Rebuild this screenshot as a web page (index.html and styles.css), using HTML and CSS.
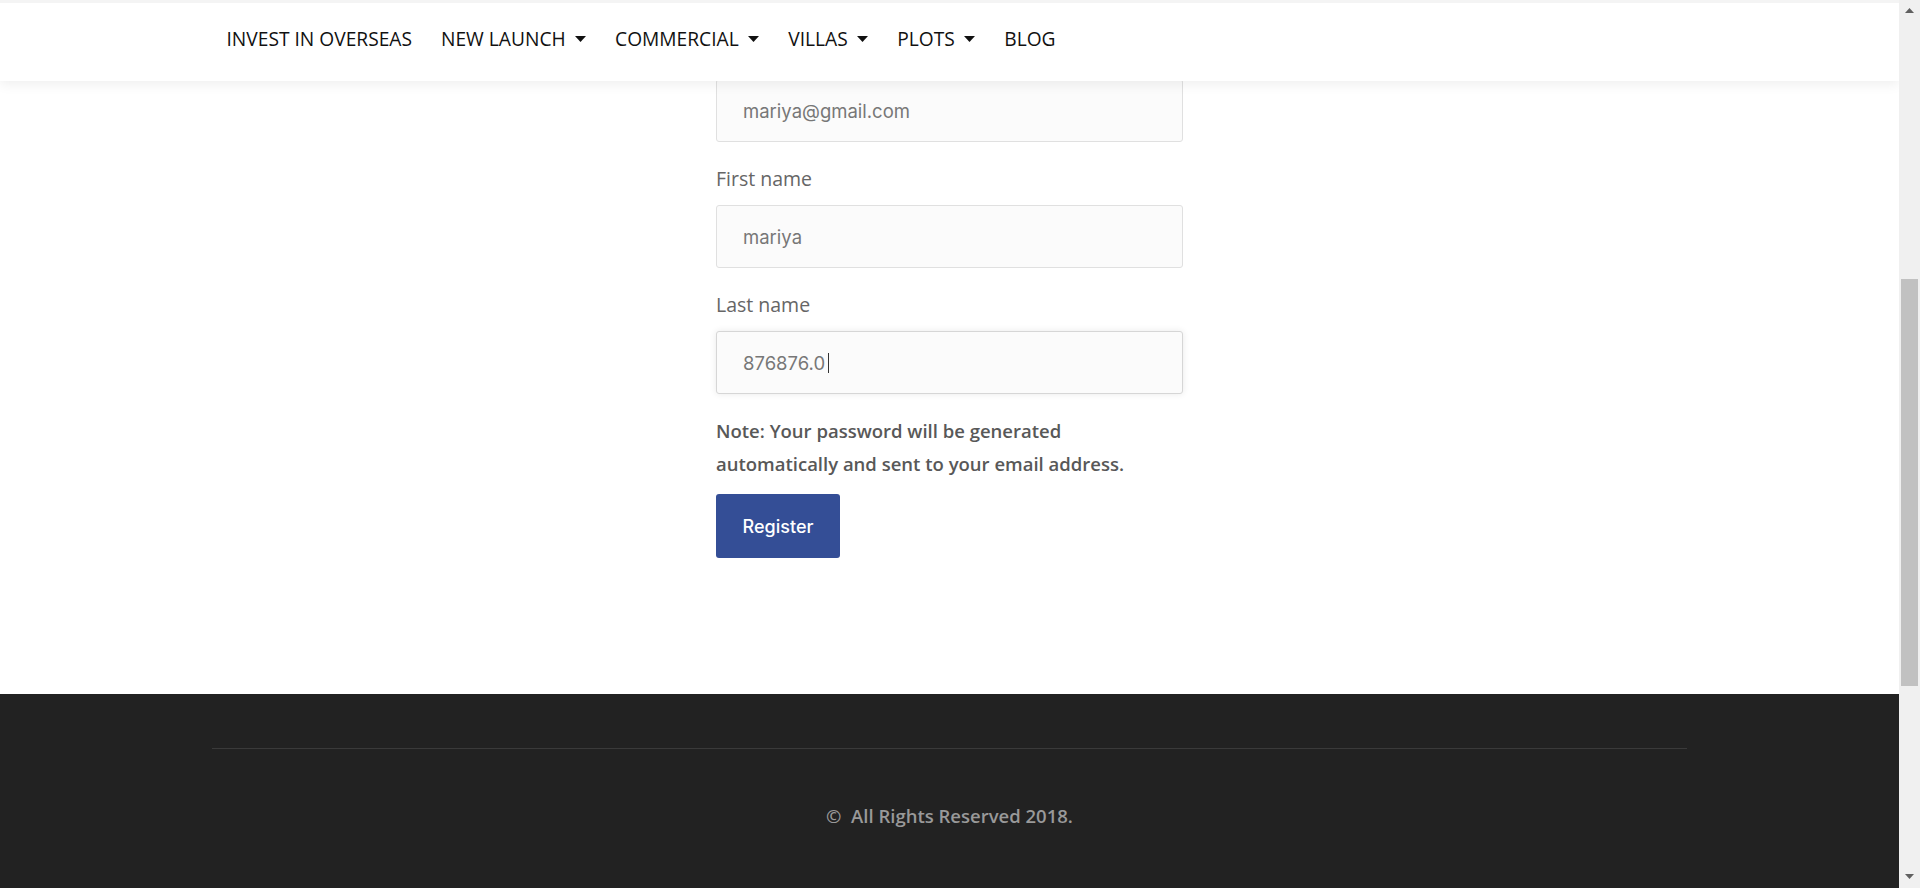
FILE: index.html
```html
<!DOCTYPE html>
<html lang="en">
<head>
<meta charset="utf-8">
<title>Register</title>
<link rel="stylesheet" href="styles.css">
</head>
<body>
<div class="viewport">
  <div class="page">
    <header class="site-header">
      <nav class="container nav">
        <a class="nav-item" href="#">INVEST IN OVERSEAS</a>
        <a class="nav-item" href="#">NEW LAUNCH <svg class="caret" width="11" height="6" viewBox="0 0 11 6"><polygon points="0,0 11,0 5.5,6"/></svg></a>
        <a class="nav-item" href="#">COMMERCIAL <svg class="caret" width="11" height="6" viewBox="0 0 11 6"><polygon points="0,0 11,0 5.5,6"/></svg></a>
        <a class="nav-item" href="#">VILLAS <svg class="caret" width="11" height="6" viewBox="0 0 11 6"><polygon points="0,0 11,0 5.5,6"/></svg></a>
        <a class="nav-item" href="#">PLOTS <svg class="caret" width="11" height="6" viewBox="0 0 11 6"><polygon points="0,0 11,0 5.5,6"/></svg></a>
        <a class="nav-item" href="#">BLOG</a>
      </nav>
    </header>

    <main class="register">
      <form class="register-form">
        <div class="form-group">
          <input class="field" type="email" value="mariya@gmail.com">
        </div>
        <div class="form-group">
          <label class="label">First name</label>
          <input class="field" type="text" value="mariya">
        </div>
        <div class="form-group">
          <label class="label">Last name</label>
          <div class="field-wrap">
            <input class="field field-focus" type="text" value="876876.0">
            <span class="text-caret"></span>
          </div>
        </div>
        <p class="note">Note: Your password will be generated automatically and sent to your email address.</p>
        <button class="btn" type="button">Register</button>
      </form>
    </main>

    <footer class="site-footer">
      <div class="container footer-inner">
        <p class="copyright">&copy;&nbsp; All Rights Reserved 2018.</p>
      </div>
    </footer>
  </div>

  <div class="scrollbar">
    <svg class="sb-arrow" width="9" height="5" viewBox="0 0 9 5"><polygon points="0,5 9,5 4.5,0"/></svg>
    <div class="sb-track"><div class="sb-thumb"></div></div>
    <svg class="sb-arrow" width="9" height="5" viewBox="0 0 9 5"><polygon points="0,0 9,0 4.5,5"/></svg>
  </div>
</div>
</body>
</html>
```

FILE: styles.css
```css
* { box-sizing: border-box; }

html, body {
  margin: 0;
  padding: 0;
  height: 100%;
  overflow: hidden;
}

body {
  font-family: "Open Sans", "Liberation Sans", sans-serif;
  background: #fff;
}

.viewport {
  display: flex;
  width: 1920px;
  height: 888px;
}

.page {
  position: relative;
  flex: 1;
  display: flex;
  flex-direction: column;
  overflow: hidden;
  background: #fff;
}

.container {
  width: 1475px;
  margin: 0 auto;
}

/* Fixed header (overlays the scrolled content) */
.site-header {
  position: absolute;
  top: 0;
  left: 0;
  right: 0;
  height: 81px;
  background: #fff;
  border-top: 3px solid #f4f4f4;
  box-shadow: 0 3px 12px rgba(0, 0, 0, 0.07);
  z-index: 10;
}

.nav {
  display: flex;
  align-items: center;
  height: 78px;
  padding-bottom: 6px;
}

.nav-item {
  display: flex;
  align-items: center;
  padding: 0 14.5px;
  font-size: 19.2px;
  color: #111;
  text-decoration: none;
  line-height: 28px;
  white-space: pre;
}

.caret {
  margin-left: 4.5px;
  fill: #111;
}

/* Form area */
.register {
  height: 694px;
  flex: none;
  padding-top: 79px;
}

.register-form {
  width: 467px;
  margin: 0 auto;
}

.form-group {
  margin-bottom: 23px;
}

.label {
  display: block;
  font-size: 19.5px;
  line-height: 28px;
  color: #666;
  margin-bottom: 12px;
}

.field-wrap {
  position: relative;
}

.field {
  display: block;
  width: 100%;
  height: 63px;
  padding: 0 26px;
  background: #fbfbfb;
  border: 1px solid #e0e0e0;
  border-radius: 3px;
  font-family: "Inter", "Noto Sans", sans-serif;
  font-size: 18.5px;
  color: #777;
  outline: none;
}

.field-focus {
  border-color: #d6d6d6;
  box-shadow: 0 0 7px rgba(0, 0, 0, 0.09);
}

.text-caret {
  position: absolute;
  left: 112px;
  top: 22px;
  width: 1px;
  height: 20px;
  background: #333;
}

.note {
  margin: -3px 0 14px;
  font-size: 18.5px;
  font-weight: 600;
  line-height: 33px;
  color: #585858;
}

.btn {
  display: block;
  width: 124px;
  height: 64px;
  padding: 0;
  border: none;
  border-radius: 3px;
  background: #344e96;
  color: #fff;
  font-family: "Inter", "Noto Sans", sans-serif;
  font-size: 18px;
  font-weight: 500;
  cursor: pointer;
}

/* Footer */
.site-footer {
  flex: 1;
  background: #222;
  padding-top: 54px;
}

.footer-inner {
  border-top: 1px solid #3a3a3a;
  padding-top: 54px;
}

.copyright {
  margin: 0;
  text-align: center;
  font-size: 18.5px;
  font-weight: 600;
  line-height: 26px;
  color: #999;
}

/* Scrollbar */
.scrollbar {
  width: 21px;
  flex: none;
  display: flex;
  flex-direction: column;
  align-items: center;
  background: #f0f0f0;
  padding: 8px 0 9px;
}

.sb-arrow {
  fill: #606060;
  flex: none;
}

.sb-track {
  flex: 1;
  width: 100%;
  padding: 266px 2px 0;
}

.sb-thumb {
  width: 17px;
  height: 407px;
  background: #c1c1c1;
}
```
